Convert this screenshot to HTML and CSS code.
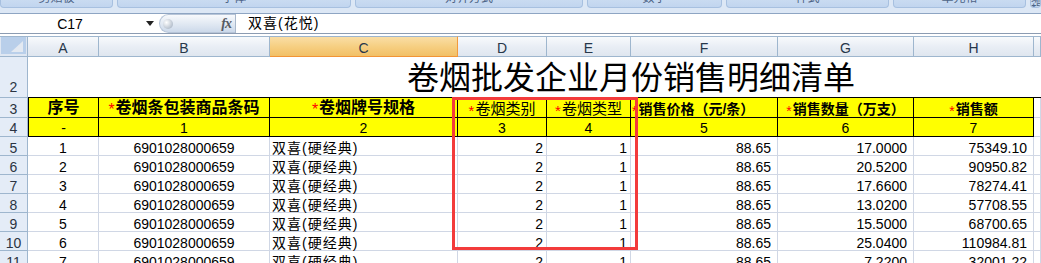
FILE: index.html
```html
<!DOCTYPE html>
<html lang="zh-CN">
<head>
<meta charset="utf-8">
<title>卷烟批发企业月份销售明细清单</title>
<link rel="stylesheet" href="styles.css">
</head>
<body>
<div class="ribbon">
  <div class="grp"><span>剪贴板</span></div>
  <div class="grp"><span>字体</span></div>
  <div class="grp"><span>对齐方式</span></div>
  <div class="grp"><span>数字</span></div>
  <div class="grp"><span>样式</span></div>
  <div class="grp"><span>单元格</span></div>
  <div class="grp"><span>编辑</span></div>
</div>
<div class="fbar">
  <div class="namebox">
    <span class="nametext">C17</span>
    <svg class="arrow" width="8" height="5" viewBox="0 0 8 5"><polygon points="0,0 8,0 4,5" fill="#222"/></svg>
  </div>
  <div class="pill">
    <span class="knob"></span>
    <span class="fx">fx</span>
  </div>
  <div class="fcontent">双喜(花悦)</div>
</div>
<div class="gap"></div>
<div class="sheet">
  <div class="corner"><svg width="27" height="19" viewBox="0 0 27 19"><rect x="1" y="1" width="25" height="17" fill="#b9cfea"/><polygon points="23,5 23,16 11,16" fill="#e3e9f1"/></svg></div>
  <div class="ch">A</div><div class="ch">B</div><div class="ch sel">C</div><div class="ch">D</div><div class="ch">E</div><div class="ch">F</div><div class="ch">G</div><div class="ch">H</div><div class="ch"></div>

  <div class="rh rh2">2</div>
  <div class="title">卷烟批发企业月份销售明细清单</div>

  <div class="rh rh3">3</div>
  <div class="y yh ya">序号</div>
  <div class="y yh"><span class="star">*</span>卷烟条包装商品条码</div>
  <div class="y yh"><span class="star">*</span>卷烟牌号规格</div>
  <div class="y yh thin"><span class="star">*</span>卷烟类别</div>
  <div class="y yh thin"><span class="star">*</span>卷烟类型</div>
  <div class="y yh sm lft"><span class="star">*</span>销售价格（元/条）</div>
  <div class="y yh sm"><span class="star">*</span>销售数量（万支）</div>
  <div class="y yh sm"><span class="star">*</span>销售额</div>
  <div class="c hblank"></div>

  <div class="rh rh4">4</div>
  <div class="y yn ya">-</div>
  <div class="y yn">1</div>
  <div class="y yn">2</div>
  <div class="y yn">3</div>
  <div class="y yn">4</div>
  <div class="y yn">5</div>
  <div class="y yn">6</div>
  <div class="y yn">7</div>
  <div class="c nblank"></div>

  <div class="rh">5</div><div class="c ctr">1</div><div class="c ctr">6901028000659</div><div class="c lt">双喜(硬经典)</div><div class="c r3">2</div><div class="c r3">1</div><div class="c r6">88.65</div><div class="c r6">17.0000</div><div class="c r6">75349.10</div><div class="c"></div>
  <div class="rh">6</div><div class="c ctr">2</div><div class="c ctr">6901028000659</div><div class="c lt">双喜(硬经典)</div><div class="c r3">2</div><div class="c r3">1</div><div class="c r6">88.65</div><div class="c r6">20.5200</div><div class="c r6">90950.82</div><div class="c"></div>
  <div class="rh">7</div><div class="c ctr">3</div><div class="c ctr">6901028000659</div><div class="c lt">双喜(硬经典)</div><div class="c r3">2</div><div class="c r3">1</div><div class="c r6">88.65</div><div class="c r6">17.6600</div><div class="c r6">78274.41</div><div class="c"></div>
  <div class="rh">8</div><div class="c ctr">4</div><div class="c ctr">6901028000659</div><div class="c lt">双喜(硬经典)</div><div class="c r3">2</div><div class="c r3">1</div><div class="c r6">88.65</div><div class="c r6">13.0200</div><div class="c r6">57708.55</div><div class="c"></div>
  <div class="rh">9</div><div class="c ctr">5</div><div class="c ctr">6901028000659</div><div class="c lt">双喜(硬经典)</div><div class="c r3">2</div><div class="c r3">1</div><div class="c r6">88.65</div><div class="c r6">15.5000</div><div class="c r6">68700.65</div><div class="c"></div>
  <div class="rh">10</div><div class="c ctr">6</div><div class="c ctr">6901028000659</div><div class="c lt">双喜(硬经典)</div><div class="c r3">2</div><div class="c r3">1</div><div class="c r6">88.65</div><div class="c r6">25.0400</div><div class="c r6">110984.81</div><div class="c"></div>
  <div class="rh">11</div><div class="c ctr">7</div><div class="c ctr">6901028000659</div><div class="c lt">双喜(硬经典)</div><div class="c r3">2</div><div class="c r3">1</div><div class="c r6">88.65</div><div class="c r6">7.2200</div><div class="c r6">32001.22</div><div class="c"></div>
</div>
<div class="redbox"></div>
</body>
</html>
```

FILE: styles.css
```css
html, body {
  margin: 0;
  padding: 0;
}
body {
  width: 1041px;
  height: 263px;
  overflow: hidden;
  position: relative;
  background: #fff;
  font-family: "Liberation Sans", "Noto Sans CJK SC", sans-serif;
  color: #000;
}

/* ribbon remnants */
.ribbon {
  height: 13px;
  background: #dce7f5;
  border-bottom: 1px solid #8ea5c3;
  display: grid;
  grid-template-columns: 113px 234px 228px 135px 163px 133px 1fr;
  column-gap: 4px;
  overflow: hidden;
}
.grp {
  box-sizing: border-box;
  height: 8px;
  background: linear-gradient(#c9dbf1, #c1d5ef);
  border: 1px solid #a7c0e0;
  border-top: none;
  border-radius: 0 0 4px 4px;
  overflow: hidden;
  text-align: center;
}
.grp span {
  display: block;
  font-size: 12px;
  line-height: 12px;
  margin-top: -8px;
  color: #4d6486;
}

/* formula bar */
.fbar {
  height: 19px;
  border-bottom: 1px solid #8c9cb2;
  display: flex;
  background: #fff;
}
.namebox {
  width: 159px;
  display: flex;
  align-items: center;
  font-size: 14px;
}
.nametext {
  width: 140px;
  text-align: center;
  line-height: 16px;
  padding-top: 1px;
}
.arrow {
  margin-left: 6px;
}
.pill {
  box-sizing: border-box;
  width: 76px;
  height: 19px;
  border: 1px solid #b7c5d8;
  border-right: none;
  border-radius: 10px 0 0 10px;
  background: linear-gradient(#f7f9fc, #e0e8f2 55%, #ccd9ea);
  display: flex;
  align-items: center;
  justify-content: space-between;
  padding: 0 4px 0 3px;
}
.knob {
  width: 10px;
  height: 10px;
  border-radius: 50%;
  background: radial-gradient(circle at 35% 35%, #ffffff, #b8c2cf 70%, #98a4b4);
}
.fx {
  font-family: "Liberation Serif", serif;
  font-style: italic;
  font-weight: bold;
  font-size: 14px;
  color: #555a62;
  letter-spacing: -1px;
  line-height: 16px;
}
.fcontent {
  border-left: 1px solid #a9b8cb;
  padding-left: 12px;
  font-size: 14px;
  line-height: 18px;
  letter-spacing: 1px;
  flex: 1;
  white-space: nowrap;
}
.gap {
  height: 2px;
}

/* sheet */
.sheet {
  display: grid;
  grid-template-columns: 28px 71px 171px 188px 89px 84px 147px 136px 120px 7px;
  grid-template-rows: 21px 41px 20px 19px repeat(7, 19px);
  font-size: 14px;
  line-height: 16px;
}
.sheet > div {
  box-sizing: border-box;
  white-space: nowrap;
  overflow: visible;
  min-width: 0;
}
.corner {
  border-top: 1px solid #9eb6ce;
  border-right: 1px solid #9eb6ce;
  border-bottom: 1px solid #9eb6ce;
  background: #dfe7f2;
  line-height: 0;
}
.corner svg {
  display: block;
  margin-top: -1px;
}
.ch {
  border-top: 1px solid #9eb6ce;
  border-right: 1px solid #9eb6ce;
  border-bottom: 1px solid #9eb6ce;
  background: linear-gradient(#f8fafc, #e9eef5 50%, #dfe6ef);
  text-align: center;
  color: #27374a;
  padding-top: 3px;
  overflow: hidden;
}
.ch.sel {
  background: linear-gradient(#fadea6, #f6cf82 50%, #f2c066);
  border-right-color: #f29a3d;
  border-bottom-color: #f29436;
}
.rh {
  background: #e4ecf7;
  border-right: 1px solid #9eb6ce;
  border-bottom: 1px solid #9eb6ce;
  text-align: center;
  color: #2b3442;
  padding-top: 3px;
}
.rh2 { padding-top: 22px; }
.rh3 { padding-top: 3px; }
.rh4 { padding-top: 2px; }

.title {
  grid-column: span 9;
  border-bottom: 1px solid #000;
  font-size: 32px;
  line-height: 40px;
  padding-left: 379px;
  padding-top: 1px;
  overflow: hidden;
}

.y {
  background: #ffff00;
  border-right: 1px solid #000;
  border-bottom: 1px solid #000;
  text-align: center;
}
.ya { border-left: 1px solid #000; }
.yh {
  font-size: 16px;
  line-height: 18px;
  font-weight: bold;
  padding-top: 1px;
}
.yh.thin {
  font-weight: normal;
  font-size: 15px;
  padding-top: 2px;
}
.yh.sm {
  font-size: 14px;
  padding-top: 2px;
}
.yh.lft {
  text-align: left;
  padding-left: 1px;
}
.yn { padding-top: 2px; }
.star {
  color: #ff0000;
  font-weight: normal;
  position: relative;
  top: 2px;
  margin-right: 1px;
}

.c {
  border-right: 1px solid #d0d7e5;
  border-bottom: 1px solid #d0d7e5;
  padding-top: 3px;
}
.hblank { padding-top: 0; }
.nblank { padding-top: 0; }
.ctr { text-align: center; }
.lt {
  text-align: left;
  padding-left: 2px;
  letter-spacing: 1px;
}
.r3 { text-align: right; padding-right: 3px; }
.r6 { text-align: right; padding-right: 6px; }

.redbox {
  position: absolute;
  left: 452px;
  top: 97px;
  width: 186px;
  height: 153px;
  box-sizing: border-box;
  border: 3px solid #f33b3b;
  pointer-events: none;
}
```
